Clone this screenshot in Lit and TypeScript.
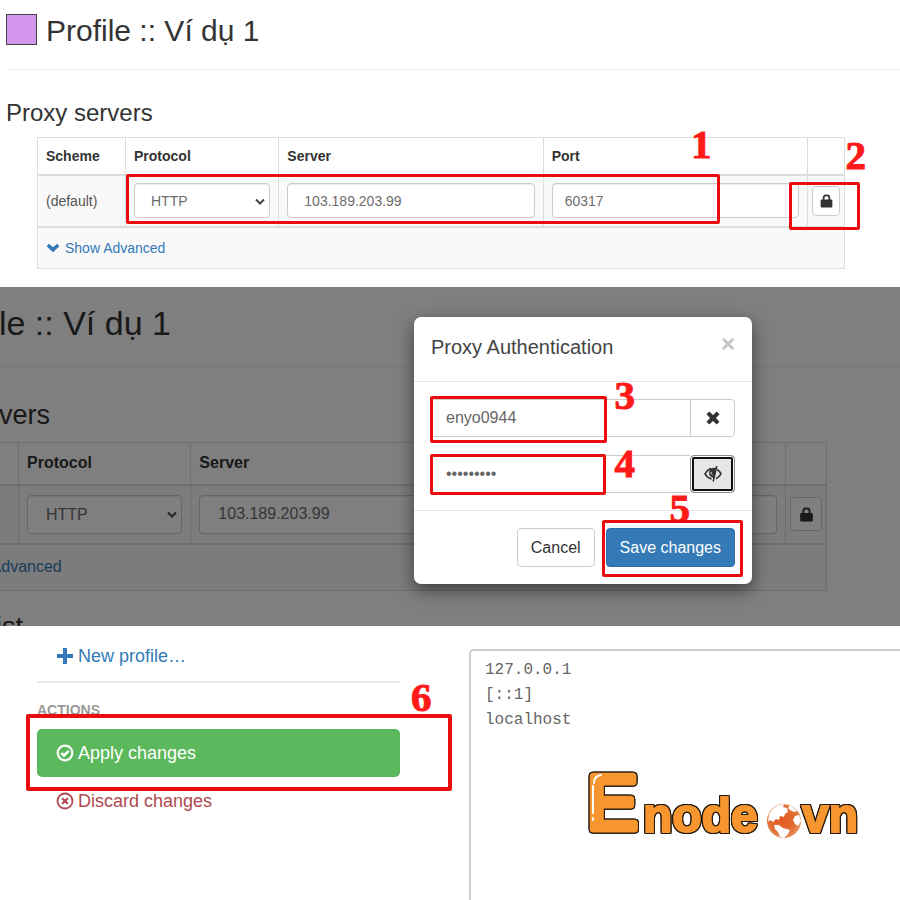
import { LitElement, html, css, svg } from "lit";
import { customElement, property } from "lit/decorators.js";

const lockIcon = svg`<svg class="lock" viewBox="0 0 14 15" aria-hidden="true">
  <path d="M1.6 6h10.8q.9 0 .9 .9v6.6q0 .9-.9 .9H1.6q-.9 0-.9-.9V6.900q0-.9 .9-.9z" fill="currentColor"/>
  <path d="M3.900 7V4.200Q3.900 1.500 6.200 1.500h1.600Q10.100 1.500 10.100 4.200V7" fill="none" stroke="currentColor" stroke-width="1.900"/>
</svg>`;

const chevronIcon = svg`<svg class="chevron" viewBox="0 0 14 10" aria-hidden="true">
  <path d="M.6 3.200 2.900 .8 7 4.300 11.100 .8 13.400 3.200 7 9.200z" fill="currentColor"/>
</svg>`;

@customElement("proxy-form")
export class ProxyForm extends LitElement {
  @property({ type: Boolean }) bypass = false;

  static styles = css`
    :host {
      display: block;
      color: #333;
      font-family: "Liberation Sans", Arial, sans-serif;
      font-size: var(--text, 14px);
    }
    .header {
      display: flex;
      align-items: flex-start;
      gap: var(--title-gap, 9px);
      padding: var(--top, 14px) 0 var(--head-pad, 21px);
      border-bottom: 1px solid #eee;
    }
    .swatch {
      box-sizing: border-box;
      width: var(--swatch, 31px);
      height: var(--swatch, 31px);
      border: 1px solid #444;
      background: #d396ee;
    }
    h1,
    h3 {
      margin: 0;
      font-weight: 400;
    }
    h1 {
      font-size: var(--title, 30px);
      line-height: var(--title-line, 34px);
      white-space: nowrap;
    }
    h3 {
      margin-top: var(--section, 30px);
      font-size: var(--sub, 24px);
      line-height: var(--sub-line, 26px);
    }
    .next {
      margin-top: 21px;
    }
    .holder {
      margin: var(--table-gap, 11px) var(--inset-right, 55px) 0 var(--inset-left, 31px);
    }
    table {
      width: 100%;
      border-collapse: collapse;
      table-layout: fixed;
      background: #fff;
    }
    th,
    td {
      box-sizing: border-box;
      padding: 0 8px;
      border: 1px solid #ddd;
      text-align: left;
    }
    th {
      height: var(--th, 37px);
      border-bottom-width: 2px;
    }
    td {
      height: var(--td, 52px);
      background: #f9f9f9;
      color: #555;
    }
    tfoot td {
      height: var(--foot, 42px);
      border-top-width: 2px;
    }
    .c1 { width: var(--first, 88px); }
    .c2 { width: 19%; }
    .c5 { width: var(--last, 37px); }
    td.tight { padding: 0 4px; }
    .pick {
      position: relative;
      display: block;
    }
    .pick svg {
      position: absolute;
      right: 5px;
      top: 50%;
      width: 10px;
      height: 8px;
      margin-top: -3px;
      pointer-events: none;
    }
    select,
    input,
    button {
      box-sizing: border-box;
      display: block;
      margin: 0;
      border: 1px solid #ccc;
      border-radius: 4px;
      background: #fff;
      font: inherit;
    }
    select,
    input {
      width: 100%;
      height: var(--field, 35px);
      padding: 0 var(--field-pad, 16px);
      color: #6c6c6c;
      appearance: none;
      box-shadow: inset 0 1px 1px rgba(0, 0, 0, 0.075);
    }
    input.port { padding: 0 12px; }
    button {
      display: flex;
      align-items: center;
      justify-content: center;
      width: 100%;
      height: var(--lock-button, 30px);
      padding: 0;
      color: #333;
    }
    .lock {
      width: var(--lock, 13px);
      height: var(--lock, 14px);
    }
    a {
      display: inline-flex;
      align-items: center;
      gap: 5px;
      color: #337ab7;
      text-decoration: none;
    }
    .chevron {
      width: 14px;
      height: 10px;
    }
  `;

  render() {
    return html`
      <div class="header">
        <span class="swatch"></span>
        <h1>Profile :: Ví dụ 1</h1>
      </div>
      <h3>Proxy servers</h3>
      <div class="holder">
        <table>
          <colgroup>
            <col class="c1" /><col class="c2" /><col /><col /><col class="c5" />
          </colgroup>
          <thead>
            <tr><th>Scheme</th><th>Protocol</th><th>Server</th><th>Port</th><th></th></tr>
          </thead>
          <tbody>
            <tr>
              <td>(default)</td>
              <td>
                <span class="pick">
                  <select aria-label="Protocol"><option>HTTP</option></select>
                  <svg viewBox="0 0 10 8" aria-hidden="true">
                    <path d="M1 1.500 5 5.500 9 1.500" fill="none" stroke="#444" stroke-width="2" />
                  </svg>
                </span>
              </td>
              <td><input aria-label="Server" .value=${"103.189.203.99"} /></td>
              <td><input class="port" aria-label="Port" .value=${"60317"} /></td>
              <td class="tight"><button aria-label="Authentication">${lockIcon}</button></td>
            </tr>
          </tbody>
          <tfoot>
            <tr><td colspan="5"><a href="#">${chevronIcon}<span>Show Advanced</span></a></td></tr>
          </tfoot>
        </table>
      </div>
      ${this.bypass ? html`<h3 class="next">Bypass List</h3>` : ""}
    `;
  }
}

@customElement("auth-dialog")
export class AuthDialog extends LitElement {
  static styles = css`
    :host {
      display: block;
      width: 338px;
      border-radius: 7px;
      background: #fff;
      box-shadow: 0 6px 17px rgba(0, 0, 0, 0.5);
      color: #333;
      font: 16px/22px "Liberation Sans", Arial, sans-serif;
    }
    .head {
      display: flex;
      justify-content: space-between;
      align-items: flex-start;
      height: 47px;
      padding: 17px 17px 0;
      border-bottom: 1px solid #e5e5e5;
    }
    h4 {
      margin: 0;
      color: #444;
      font-size: 20px;
      line-height: 27px;
      font-weight: 400;
    }
    button,
    input {
      box-sizing: border-box;
      margin: 0;
      font: inherit;
    }
    .close {
      padding: 0;
      border: 0;
      background: none;
      color: #c4c4c4;
      font-size: 24px;
      line-height: 20px;
      font-weight: 700;
    }
    .body {
      display: grid;
      gap: 18px;
      padding: 17px;
    }
    .group {
      display: flex;
      height: 38px;
    }
    input {
      flex: 1;
      min-width: 0;
      padding: 0 14px;
      border: 1px solid #ccc;
      border-right: 0;
      border-radius: 4px 0 0 4px;
      color: #666;
    }
    .addon {
      display: flex;
      align-items: center;
      justify-content: center;
      width: 45px;
      padding: 0;
      border: 1px solid #ccc;
      border-radius: 0 4px 4px 0;
      background: #fff;
      color: #333;
    }
    .addon.on {
      border-color: #8c8c8c;
      border-radius: 4px;
      background: #e6e6e6;
      box-shadow: inset 0 0 0 1px #fff, inset 0 0 0 3px #101010;
    }
    .addon svg {
      width: 18px;
      height: 18px;
    }
    .foot {
      display: flex;
      justify-content: flex-end;
      gap: 11px;
      padding: 17px;
      border-top: 1px solid #e5e5e5;
    }
    .foot button {
      height: 39px;
      padding: 0 13px;
      border: 1px solid #ccc;
      border-radius: 4px;
      background: #fff;
      color: #333;
    }
    .foot .primary {
      border-color: #2e6da4;
      background: #337ab7;
      color: #fff;
    }
  `;

  render() {
    return html`
      <div class="head">
        <h4>Proxy Authentication</h4>
        <button class="close" aria-label="Close">×</button>
      </div>
      <div class="body">
        <div class="group">
          <input aria-label="Username" .value=${"enyo0944"} />
          <button class="addon" aria-label="Clear">
            <svg viewBox="0 0 18 18">
              <path d="M2.500 5.300 5.300 2.500 9 6.100 12.700 2.500 15.500 5.300 12 9 15.500 12.700 12.700 15.500 9 11.900 5.300 15.500 2.500 12.700 6 9z" fill="currentColor" />
            </svg>
          </button>
        </div>
        <div class="group">
          <input type="password" aria-label="Password" .value=${"123456789"} />
          <button class="addon on" aria-label="Show password">
            <svg viewBox="0 0 18 18">
              <path d="M7 3.200Q3 5 1 8.800 3.200 12.800 7.600 13.900M13.200 4.500Q15.800 6.300 17 8.800 15 12.300 12 13.800" fill="none" stroke="currentColor" stroke-width="1.600" />
              <path d="M12.800 1 9.200 16.500" stroke="currentColor" stroke-width="1.500" />
              <path d="M6.300 3.800Q9.500 2.500 12.300 3L10 13Q5.800 12.200 5.100 9 4.700 6 6.300 3.800z" fill="currentColor" />
              <path d="M6.900 6.800Q6.900 9.200 8.600 10" fill="none" stroke="#e6e6e6" stroke-width="1" />
            </svg>
          </button>
        </div>
      </div>
      <div class="foot">
        <button>Cancel</button>
        <button class="primary">Save changes</button>
      </div>
    `;
  }
}

@customElement("brand-logo")
export class BrandLogo extends LitElement {
  static styles = css`
    :host {
      display: block;
      width: 280px;
    }
    svg {
      display: block;
      width: 100%;
    }
    text {
      fill: #f7962f;
      stroke: #f7962f;
      stroke-linejoin: round;
      font-family: "Liberation Sans", Arial, sans-serif;
    }
    .ink {
      filter: drop-shadow(1px 0 #241a10) drop-shadow(-1px 0 #241a10) drop-shadow(0 1px #241a10) drop-shadow(0 -1px #241a10);
    }
    .big {
      font-size: 76px;
      stroke-width: 7px;
    }
    .small {
      font-size: 48px;
      font-weight: 700;
      stroke-width: 2px;
      stroke-linejoin: miter;
    }
  `;

  render() {
    return html`
      <svg viewBox="0 0 280 80" role="img" aria-label="Enode.vn">
        <defs>
          <radialGradient id="sea" cx=".45" cy=".45" r=".6">
            <stop offset="0" stop-color="#e4571d" />
            <stop offset=".7" stop-color="#e27035" />
            <stop offset="1" stop-color="#eba177" />
          </radialGradient>
        </defs>
        <g class="ink">
          <text class="big" x="-1" y="63">E</text>
          <text class="small" x="55" y="66">node</text>
          <text class="small" x="214" y="66">vn</text>
        </g>
        <path d="M6 17Q6 10 13 9" fill="none" stroke="#fff" stroke-width="2" stroke-linecap="round" />
        <path d="M5 20v27M5 52v2" fill="none" stroke="#fff" stroke-width="2" stroke-linecap="round" />
        <g transform="translate(178 37)">
          <circle cx="18" cy="18" r="17" fill="url(#sea)" />
          <path d="M3 11Q7 4 13 2l5-1-1 3 4 1 1 4-3 2-1 3-4-1-1 4-3-1-3 3-3-2-2 2z" fill="#fff" />
          <path d="M8 22l5 0 4 3 7 2-2 4-4 4-4-1-2-5-3-3z" fill="#fff" />
          <path d="M24 2q5 2 7 6l-3 1-4-2-2-2zM29 13l4-1 2 6-3 5-3-2-2-4z" fill="#fff" />
          <path d="M6 5.500Q11 1 18 1t13 6" fill="none" stroke="#f3d8c8" stroke-width="1" />
        </g>
      </svg>
    `;
  }
}

@customElement("app-root")
export class AppRoot extends LitElement {
  static styles = css`
    :host {
      display: flex;
      flex-direction: column;
      min-height: 100vh;
      background: #fff;
      font-family: "Liberation Sans", Arial, sans-serif;
    }
    section {
      position: relative;
      overflow: hidden;
    }
    .first {
      padding: 0 0 18px 6px;
    }
    .second {
      height: 339px;
    }
    .second proxy-form {
      margin-left: -115px;
      --text: 16px;
      --title: 34px;
      --title-line: 38px;
      --title-gap: 10px;
      --swatch: 34px;
      --top: 17px;
      --head-pad: 24px;
      --sub: 27px;
      --sub-line: 30px;
      --section: 33px;
      --table-gap: 12px;
      --inset-left: 34px;
      --inset-right: 73px;
      --th: 42px;
      --td: 59px;
      --foot: 47px;
      --field: 39px;
      --field-pad: 18px;
      --lock-button: 34px;
      --lock: 15px;
      --first: 99px;
      --last: 41px;
    }
    .shade {
      position: absolute;
      inset: 0;
      background: rgba(0, 0, 0, 0.5);
    }
    auth-dialog {
      position: absolute;
      top: 30px;
      right: 148px;
    }
    .third {
      flex: 1;
      display: flex;
      gap: 69px;
      min-height: 274px;
    }
    nav {
      flex: 0 0 363px;
      padding: 18px 0 0 37px;
      font-size: 18px;
      line-height: 24px;
    }
    .item {
      display: flex;
      align-items: center;
      gap: 4px;
      box-sizing: border-box;
      width: 100%;
      padding: 0 19px;
      color: #337ab7;
      text-decoration: none;
    }
    .item svg {
      width: 18px;
      height: 18px;
    }
    .line {
      height: 0;
      margin: 13px 0 19px;
      border: 0;
      border-top: 2px solid #e8e8e8;
    }
    h2 {
      margin: 0 0 11px;
      color: #999;
      font-size: 14px;
      line-height: 16px;
    }
    button.item {
      height: 48px;
      border: 0;
      border-radius: 5px;
      background: #5cb85c;
      color: #fff;
      font: inherit;
    }
    .discard {
      margin-top: 12px;
      color: #b0494f;
    }
    textarea {
      flex: 1;
      box-sizing: border-box;
      min-width: 0;
      margin: 23px 0 0;
      padding: 7px 14px;
      border: 2px solid #ccc;
      border-width: 2px 0 0 2px;
      border-radius: 5px 0 0 0;
      background: #fff;
      color: #666;
      font: 16px/25px "Liberation Mono", monospace;
      resize: none;
    }
    brand-logo {
      position: absolute;
      left: 588px;
      top: 140px;
    }
    .mark {
      position: absolute;
      box-sizing: border-box;
      border: 3px solid #e90d10;
      border-radius: 2px;
      pointer-events: none;
    }
    .thick { border-width: 4px; }
    .m1 { left: 126px; top: 174px; width: 594px; height: 50px; }
    .m2 { right: 40px; top: 182px; width: 71px; height: 48px; }
    .m3 { right: 293px; top: 109px; width: 177px; height: 47px; }
    .m4 { right: 294px; top: 167px; width: 176px; height: 41px; }
    .m5 { right: 157px; top: 233px; width: 141px; height: 57px; }
    .m6 { left: 26px; top: 88px; width: 426px; height: 77px; }
    .step {
      position: absolute;
      color: #ff1a1a;
      font: 700 41px/28px "Liberation Serif", "Times New Roman", serif;
      -webkit-text-stroke: 1px #ff1a1a;
    }
    .s1 { left: 691px; top: 130px; }
    .s2 { right: 34px; top: 141px; }
    .s3 { right: 265px; top: 94px; }
    .s4 { right: 265px; top: 162px; }
    .s5 { right: 210px; top: 207px; }
    .s6 { left: 411px; top: 57px; }
  `;

  render() {
    return html`
      <section class="first">
        <proxy-form></proxy-form>
        <div class="mark m1"></div>
        <div class="mark m2"></div>
        <span class="step s1">1</span>
        <span class="step s2">2</span>
      </section>
      <section class="second">
        <proxy-form bypass></proxy-form>
        <div class="shade"></div>
        <auth-dialog role="dialog" aria-label="Proxy Authentication"></auth-dialog>
        <span class="step s3">3</span>
        <span class="step s4">4</span>
        <span class="step s5">5</span>
        <div class="mark m3"></div>
        <div class="mark m4"></div>
        <div class="mark m5"></div>
      </section>
      <section class="third">
        <nav>
          <a class="item" href="#">
            <svg viewBox="0 0 18 18"><path d="M7 1h4v6h6v4h-6v6H7v-6H1V7h6z" fill="currentColor" /></svg>
            <span>New profile…</span>
          </a>
          <hr class="line" />
          <h2>ACTIONS</h2>
          <button class="item">
            <svg viewBox="0 0 18 18" fill="none" stroke="currentColor">
              <circle cx="9" cy="9" r="7.300" stroke-width="2.200" />
              <path d="M5.200 9 8 11.500 12.800 6.800" stroke-width="2.500" />
            </svg>
            <span>Apply changes</span>
          </button>
          <a class="item discard" href="#">
            <svg viewBox="0 0 18 18" fill="none" stroke="currentColor">
              <circle cx="9" cy="9" r="7.500" stroke-width="1.800" />
              <path d="M6.200 6.200 11.800 11.800M11.800 6.200 6.200 11.800" stroke-width="2.200" />
            </svg>
            <span>Discard changes</span>
          </a>
        </nav>
        <textarea aria-label="Bypass list" .value=${"127.0.0.1\n[::1]\nlocalhost"}></textarea>
        <brand-logo></brand-logo>
        <div class="mark thick m6"></div>
        <span class="step s6">6</span>
      </section>
    `;
  }
}
